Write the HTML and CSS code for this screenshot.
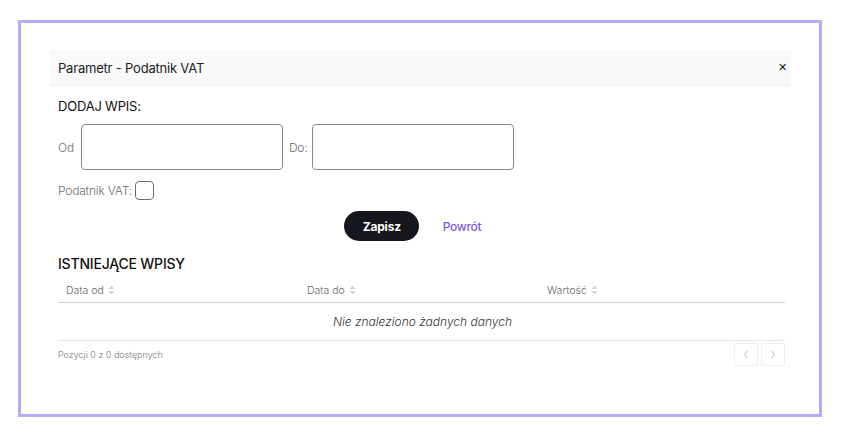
FILE: index.html
```html
<!DOCTYPE html>
<html lang="pl">
<head>
<meta charset="utf-8">
<title>Parametr - Podatnik VAT</title>
<link rel="stylesheet" href="styles.css">
</head>
<body>
<div class="frame">
  <div class="modal">
    <div class="modal-header">
      <span class="modal-title">Parametr - Podatnik VAT</span>
      <span class="close">&#x2715;</span>
    </div>
    <div class="modal-body">
      <div class="section-title">DODAJ WPIS:</div>
      <div class="date-row">
        <label class="lbl">Od</label>
        <div class="input"></div>
        <label class="lbl lbl-do">Do:</label>
        <div class="input"></div>
      </div>
      <div class="check-row">
        <label class="lbl">Podatnik VAT:</label>
        <span class="checkbox"></span>
      </div>
      <div class="actions">
        <button class="btn btn-primary">Zapisz</button>
        <button class="btn btn-link">Powrót</button>
      </div>
      <div class="section-title section-title-2">ISTNIEJĄCE WPISY</div>
      <div class="table">
        <div class="thead">
          <div class="th">Data od <span class="sort"><svg width="7" height="10" viewBox="0 0 7 10"><path d="M3.5 0.5 L6.5 4 H0.5 Z" fill="#d4d4d4"/><path d="M3.5 9.5 L6.5 6 H0.5 Z" fill="#d4d4d4"/></svg></span></div>
          <div class="th">Data do <span class="sort"><svg width="7" height="10" viewBox="0 0 7 10"><path d="M3.5 0.5 L6.5 4 H0.5 Z" fill="#d4d4d4"/><path d="M3.5 9.5 L6.5 6 H0.5 Z" fill="#d4d4d4"/></svg></span></div>
          <div class="th">Wartość <span class="sort"><svg width="7" height="10" viewBox="0 0 7 10"><path d="M3.5 0.5 L6.5 4 H0.5 Z" fill="#d4d4d4"/><path d="M3.5 9.5 L6.5 6 H0.5 Z" fill="#d4d4d4"/></svg></span></div>
        </div>
        <div class="empty">Nie znaleziono żadnych danych</div>
      </div>
      <div class="table-footer">
        <span class="info">Pozycji 0 z 0 dostępnych</span>
        <div class="pager">
          <span class="page-btn"><svg width="6" height="9" viewBox="0 0 6 9"><path d="M4.5 1 L1.5 4.5 L4.5 8" fill="none" stroke="#d8d8d8" stroke-width="1.5"/></svg></span>
          <span class="page-btn"><svg width="6" height="9" viewBox="0 0 6 9"><path d="M1.5 1 L4.5 4.5 L1.5 8" fill="none" stroke="#d8d8d8" stroke-width="1.5"/></svg></span>
        </div>
      </div>
    </div>
  </div>
</div>
</body>
</html>
```
FILE: styles.css
```css
* { box-sizing: border-box; }
html, body { margin: 0; padding: 0; background: #fff; }
body {
  font-family: Inter, "Noto Sans", "Liberation Sans", sans-serif;
  color: #1a1a1a;
}
.frame {
  margin: 20px 0 0 18px;
  width: 804px;
  height: 397px;
  border: 3px solid #bba8fb;
  padding: 27px 28px 0 29px;
}
.modal-header {
  height: 36px;
  background: #f9f9f9;
  border-bottom: 1px solid #efefef;
  display: flex;
  align-items: center;
  justify-content: space-between;
  padding: 0 4px 0 8px;
}
.modal-title {
  font-size: 13px;
  color: #222;
  letter-spacing: -0.2px;
}
.close {
  font-size: 11px;
  font-weight: 400;
  color: #111;
  line-height: 1;
}
.modal-body {
  padding: 0 6px 0 8px;
}
.section-title {
  font-size: 13px;
  font-weight: 400;
  line-height: 16px;
  margin-top: 12px;
  color: #111;
  letter-spacing: -0.2px;
}
.section-title-2 {
  margin-top: 15px;
  font-size: 14px;
  font-weight: 500;
}
.date-row {
  display: flex;
  align-items: center;
  margin-top: 10px;
}
.lbl {
  font-size: 12px;
  font-weight: 300;
  color: #6f6f6f;
  letter-spacing: -0.2px;
}
.input {
  width: 202px;
  height: 46px;
  border: 1px solid #8b8696;
  border-radius: 4px;
  margin-left: 7px;
}
.lbl-do { margin-left: 6px; }
.lbl-do + .input { margin-left: 5px; }
.check-row {
  display: flex;
  align-items: center;
  margin-top: 10px;
  height: 20px;
}
.checkbox {
  width: 19px;
  height: 19px;
  border: 1px solid #6e6a76;
  border-radius: 4px;
  margin-left: 3px;
}
.actions {
  display: flex;
  justify-content: center;
  gap: 5px;
  margin-top: 11px;
  padding-left: 1px;
}
.btn {
  height: 30px;
  border: none;
  border-radius: 15px;
  padding: 0 19px;
  font-family: inherit;
  font-size: 12px;
  cursor: pointer;
}
.btn-primary {
  background: #16171c;
  color: #fff;
  font-weight: 700;
  width: 75px;
  letter-spacing: -0.2px;
}
.btn-link {
  background: transparent;
  color: #7b5be0;
  font-weight: 500;
  letter-spacing: -0.3px;
}
.table {
  margin-top: 6px;
}
.thead {
  display: grid;
  grid-template-columns: 241px 240px 1fr;
  border-bottom: 1px solid #cfcfcf;
  height: 25px;
  align-items: center;
}
.th {
  font-size: 10.5px;
  font-weight: 300;
  color: #666;
  padding-left: 8px;
  display: flex;
  align-items: center;
  gap: 4px;
}
.sort { display: inline-flex; }
.empty {
  text-align: center;
  font-size: 12px;
  font-style: italic;
  font-weight: 300;
  color: #333;
  height: 38px;
  line-height: 37px;
  border-bottom: 1px solid #e6e6e6;
  padding-left: 2px;
}
.table-footer {
  display: flex;
  justify-content: space-between;
  align-items: flex-start;
  padding-top: 2px;
}
.info {
  font-size: 9px;
  font-weight: 300;
  color: #7a7a7a;
  margin-top: 6px;
}
.pager {
  display: flex;
  gap: 3px;
}
.page-btn {
  width: 24px;
  height: 23px;
  border: 1px solid #efefef;
  border-radius: 2px;
  display: flex;
  align-items: center;
  justify-content: center;
}
```
